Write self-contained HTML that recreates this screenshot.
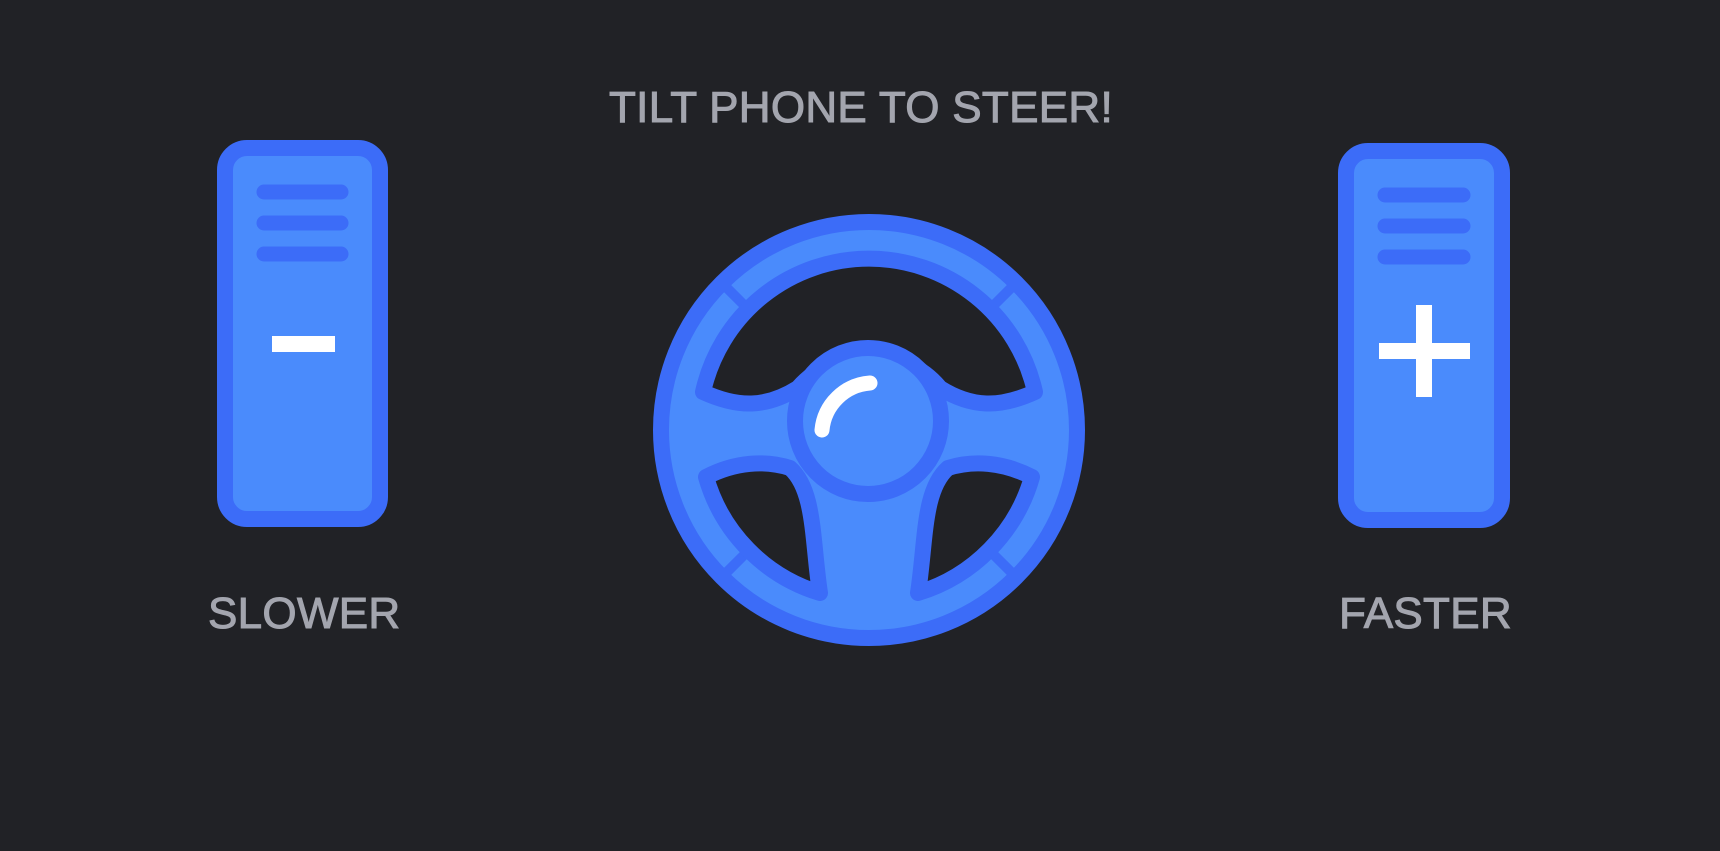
<!DOCTYPE html>
<html><head><style>
body{margin:0;width:1720px;height:851px;background:#212226;overflow:hidden;position:relative;font-family:"Liberation Sans",sans-serif}
.t{position:absolute;color:#a3a5ae;font-size:44px;white-space:nowrap;letter-spacing:0.3px;-webkit-text-stroke:1px #a3a5ae}
</style></head><body>
<div class="t" style="left:609px;top:83px">TILT PHONE TO STEER!</div>
<div class="t" style="left:208px;top:589px">SLOWER</div>
<div class="t" style="left:1339px;top:589px">FASTER</div>
<svg width="1720" height="851" style="position:absolute;left:0;top:0">
<g>
<rect x="225" y="148" width="155" height="371" rx="22" fill="#4a8bfc" stroke="#3c6cf8" stroke-width="16"/>
<g stroke="#3c6cf8" stroke-width="15" stroke-linecap="round">
<line x1="264" y1="192" x2="341" y2="192"/><line x1="264" y1="223" x2="341" y2="223"/><line x1="264" y1="254" x2="341" y2="254"/>
</g>
<rect x="272" y="336" width="63" height="16" fill="#fff"/>
</g>
<g>
<rect x="1346" y="151" width="156" height="369" rx="22" fill="#4a8bfc" stroke="#3c6cf8" stroke-width="16"/>
<g stroke="#3c6cf8" stroke-width="15" stroke-linecap="round">
<line x1="1385" y1="195" x2="1463" y2="195"/><line x1="1385" y1="226" x2="1463" y2="226"/><line x1="1385" y1="257" x2="1463" y2="257"/>
</g>
<rect x="1379" y="343" width="91" height="16" fill="#fff"/>
<rect x="1416" y="305" width="16" height="92" fill="#fff"/>
</g>
<g>
<circle cx="869" cy="430" r="208" fill="#4a8bfc" stroke="#3c6cf8" stroke-width="16"/>
<g stroke="#3c6cf8" stroke-width="10" transform="translate(869 430)">
<line x1="0" y1="-175" x2="0" y2="-202" transform="rotate(45)"/>
<line x1="0" y1="-175" x2="0" y2="-202" transform="rotate(-45)"/>
<line x1="0" y1="-175" x2="0" y2="-202" transform="rotate(135)"/>
<line x1="0" y1="-175" x2="0" y2="-202" transform="rotate(-135)"/>
</g>
<g fill="#212226" stroke="#3c6cf8" stroke-width="16" stroke-linejoin="round">
<path d="M703,392 A170 170 0 0 1 1035,392 C1000,408 972,408 940,388 C905,345 835,345 798,388 C766,408 738,408 703,392 Z"/>
<path d="M706,477 C735,462 765,460 790,468 C815,490 812,540 820,593 A170 170 0 0 1 706,477 Z"/>
<path d="M1032,477 C1003,462 973,460 948,468 C923,490 926,540 918,593 A170 170 0 0 0 1032,477 Z"/>
</g>
<circle cx="868" cy="421" r="73" fill="#4a8bfc" stroke="#3c6cf8" stroke-width="16"/>
<path d="M822,430 A52 52 0 0 1 870,383" fill="none" stroke="#fff" stroke-width="15" stroke-linecap="round"/>
</g>
</svg>
</body></html>
